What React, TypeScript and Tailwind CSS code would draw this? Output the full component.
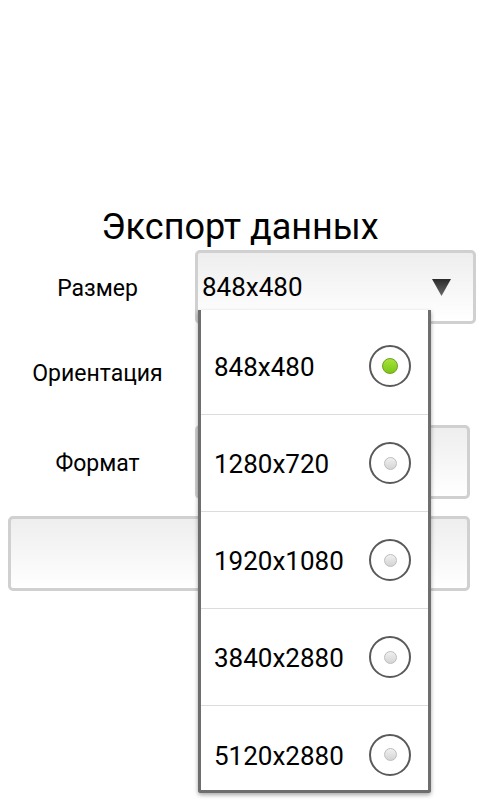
import React from "react";

const sizes = ["848x480", "1280x720", "1920x1080", "3840x2880", "5120x2880"];

function Radio({ checked }: { checked: boolean }) {
  return (
    <div className="flex h-[42px] w-[42px] items-center justify-center rounded-full border-2 border-[#5a5a5a] bg-white">
      {checked ? (
        <div className="h-[16px] w-[16px] rounded-full border border-[#6f9e1c] bg-gradient-to-b from-[#a6e33a] to-[#7cc70f]" />
      ) : (
        <div className="h-[13px] w-[13px] rounded-full border border-[#bdbdbd] bg-gradient-to-b from-[#f0f0f0] to-[#d4d4d4]" />
      )}
    </div>
  );
}

export default function App() {
  return (
    <div
      className="relative h-[800px] w-[480px] overflow-hidden bg-white text-black"
      style={{ fontFamily: "Roboto, 'Noto Sans', sans-serif" }}
    >
      {/* Form */}
      <div className="pt-[207px]">
        <h1 className="text-center text-[36px] leading-[40px]">Экспорт данных</h1>

        <div className="mt-[3px] flex items-center">
          <div className="w-[195px] pt-[5px] text-center text-[23px]">Размер</div>
          <div className="mr-[4px] flex h-[74px] flex-1 items-center justify-between rounded-[5px] border-[3px] border-[#d0d0d0] bg-gradient-to-b from-[#eeeeee] to-[#ffffff] pl-[4px] pr-[22px]">
            <span className="text-[26px]">848x480</span>
            <svg width="19" height="17" viewBox="0 0 19 17">
              <defs>
                <linearGradient id="arr" x1="0" y1="0" x2="0" y2="1">
                  <stop offset="0" stopColor="#2a2a2a" />
                  <stop offset="1" stopColor="#6a6a6a" />
                </linearGradient>
              </defs>
              <polygon points="0,0 19,0 9.5,17" fill="url(#arr)" />
            </svg>
          </div>
        </div>

        <div className="flex h-[101px] items-center">
          <div className="w-[195px] text-center text-[23px]">Ориентация</div>
        </div>

        <div className="flex items-center">
          <div className="w-[195px] pt-[5px] text-center text-[23px]">Формат</div>
          <div className="mr-[10px] h-[74px] flex-1 rounded-[5px] border-[3px] border-[#d0d0d0] bg-gradient-to-b from-[#eeeeee] to-[#ffffff]" />
        </div>

        <div className="mx-[8px] mr-[10px] mt-[17px] h-[75px] rounded-[5px] border-[3px] border-[#d0d0d0] bg-gradient-to-b from-[#eeeeee] to-[#ffffff]" />
      </div>

      {/* Dropdown popup */}
      <div className="absolute left-[198px] top-[310px] h-[483px] w-[233px] overflow-hidden rounded-b-[3px] border-x-[3px] border-b-[3px] border-[#6e6e6e] bg-white pt-[8px] shadow-[0_2px_4px_rgba(0,0,0,0.35)]">
        {sizes.map((s, i) => (
          <div
            key={s}
            className={`flex h-[97px] items-center justify-between pl-[13px] pr-[17px] ${i < sizes.length - 1 ? "border-b border-[#dcdcdc]" : ""}`}
          >
            <span className="pt-[3px] text-[26px]">{s}</span>
            <Radio checked={i === 0} />
          </div>
        ))}
      </div>
    </div>
  );
}
